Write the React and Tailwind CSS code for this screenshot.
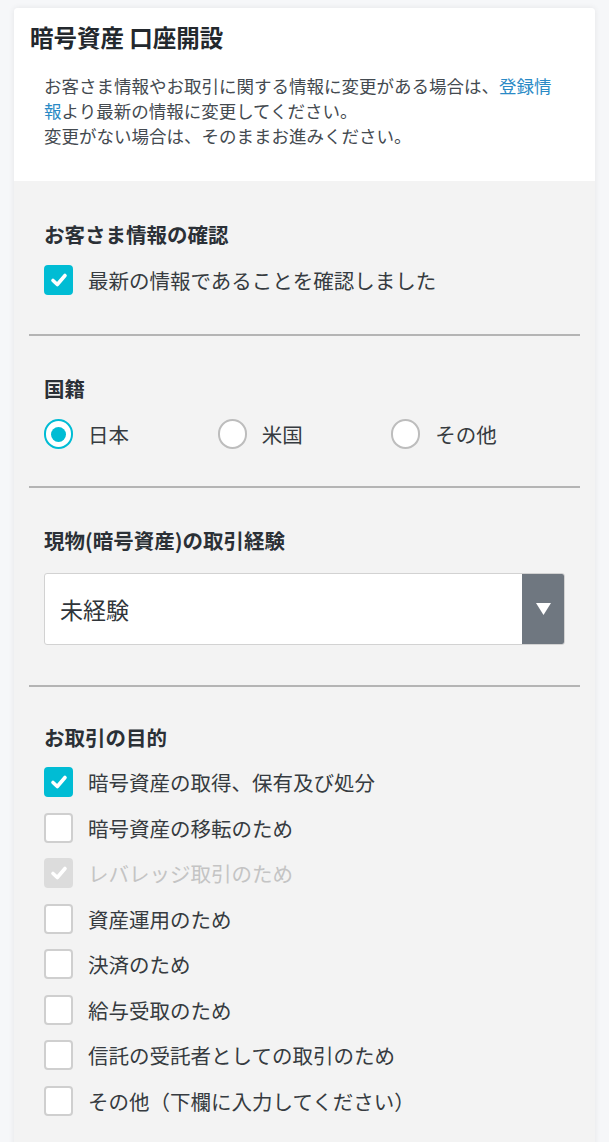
import React, { useState } from "react";

const font = { fontFamily: '"Noto Sans CJK JP", "Noto Sans", sans-serif' };

const CheckIcon = () => (
  <svg width="20" height="20" viewBox="0 0 20 20" fill="none">
    <polyline points="4,10.5 8.3,14.5 16,5.5" stroke="white" strokeWidth="3.6" strokeLinecap="round" strokeLinejoin="round" />
  </svg>
);

const CheckRow = ({ label, checked, disabled, onClick }) => {
  let box = "bg-white border-2 border-[#cfcfcf]";
  if (checked) box = "bg-[#00bcd4] border-2 border-[#00bcd4]";
  if (disabled) box = "bg-[#dcdcdc] border-2 border-[#dcdcdc]";
  return (
    <div className="flex items-center h-[30px] cursor-pointer" onClick={disabled ? undefined : onClick}>
      <span className={`w-[29px] h-[30px] rounded-[4px] flex items-center justify-center shrink-0 ${box}`}>
        {(checked || disabled) && <CheckIcon />}
      </span>
      <span className={`ml-[15px] text-[20.5px] leading-[30px] ${disabled ? "text-[#c4c4c4]" : "text-[#363b40]"}`}>{label}</span>
    </div>
  );
};

const Radio = ({ label, selected, onClick }) => (
  <div className="flex items-center h-[30px] cursor-pointer" onClick={onClick}>
    <span
      className={`w-[29px] h-[30px] rounded-full bg-white flex items-center justify-center shrink-0 border-2 ${
        selected ? "border-[#00bcd4]" : "border-[#bdbdbd]"
      }`}
    >
      {selected && <span className="w-[15px] h-[15px] rounded-full bg-[#00bcd4]"></span>}
    </span>
    <span className="ml-[15px] text-[20.5px] leading-[30px] text-[#363b40]">{label}</span>
  </div>
);

const Divider = () => <div className="h-[2px] bg-[#b4b4b4]"></div>;

const Heading = ({ children }) => (
  <h3 className="text-[20.5px] leading-[28px] font-bold text-[#2b3036]">{children}</h3>
);

export default function App() {
  const [confirmed, setConfirmed] = useState(true);
  const [nation, setNation] = useState("jp");
  const [purposes, setPurposes] = useState({ 0: true });

  const purposeList = [
    "暗号資産の取得、保有及び処分",
    "暗号資産の移転のため",
    "レバレッジ取引のため",
    "資産運用のため",
    "決済のため",
    "給与受取のため",
    "信託の受託者としての取引のため",
    "その他（下欄に入力してください）",
  ];

  return (
    <div className="min-h-[1142px] bg-[#f6f7f9] pt-[8px] px-[14px]" style={font}>
      <div className="rounded-[4px] overflow-hidden shadow-[0_0_6px_rgba(0,0,0,0.08)]">
        <header className="bg-white pt-[14px] pb-[33px] pl-[16px] pr-[30px]">
          <h1 className="text-[23.5px] leading-[30px] font-bold text-[#23282d]">暗号資産 口座開設</h1>
          <div className="mt-[21px] pl-[14px] text-[17.5px] leading-[25px] text-[#444a50]">
            <p>
              お客さま情報やお取引に関する情報に変更がある場合は、<a className="text-[#2a8ac6]">登録情</a>
            </p>
            <p>
              <a className="text-[#2a8ac6]">報</a>より最新の情報に変更してください。
            </p>
            <p>変更がない場合は、そのままお進みください。</p>
          </div>
        </header>

        <div className="bg-[#f3f3f3] px-[15px] pb-[40px]">
          <section className="px-[15px] pt-[39px] pb-[39px]">
            <Heading>お客さま情報の確認</Heading>
            <div className="mt-[17px]">
              <CheckRow label="最新の情報であることを確認しました" checked={confirmed} onClick={() => setConfirmed((p) => !p)} />
            </div>
          </section>
          <Divider />

          <section className="px-[15px] pt-[38px] pb-[37px]">
            <Heading>国籍</Heading>
            <div className="mt-[17px] grid grid-cols-3">
              <Radio label="日本" selected={nation === "jp"} onClick={() => setNation("jp")} />
              <Radio label="米国" selected={nation === "us"} onClick={() => setNation("us")} />
              <Radio label="その他" selected={nation === "other"} onClick={() => setNation("other")} />
            </div>
          </section>
          <Divider />

          <section className="px-[15px] pt-[38px] pb-[40px]">
            <Heading>現物(暗号資産)の取引経験</Heading>
            <div className="mt-[19px] h-[72px] flex bg-white border border-[#d2d2d2] rounded-[3px] overflow-hidden">
              <div className="flex-1 flex items-center pl-[15px] text-[23px] text-[#30353a]">未経験</div>
              <div className="w-[42px] bg-[#6f7780] flex items-center justify-center">
                <svg width="15" height="12" viewBox="0 0 15 12">
                  <polygon points="0,0 15,0 7.5,12" fill="white" />
                </svg>
              </div>
            </div>
          </section>
          <Divider />

          <section className="px-[15px] pt-[36px]">
            <Heading>お取引の目的</Heading>
            <div className="mt-[16px] flex flex-col gap-[15.5px]">
              {purposeList.map((p, i) => (
                <CheckRow
                  key={i}
                  label={p}
                  checked={!!purposes[i]}
                  disabled={i === 2}
                  onClick={() => setPurposes((prev) => ({ ...prev, [i]: !prev[i] }))}
                />
              ))}
            </div>
          </section>
        </div>
      </div>
    </div>
  );
}
